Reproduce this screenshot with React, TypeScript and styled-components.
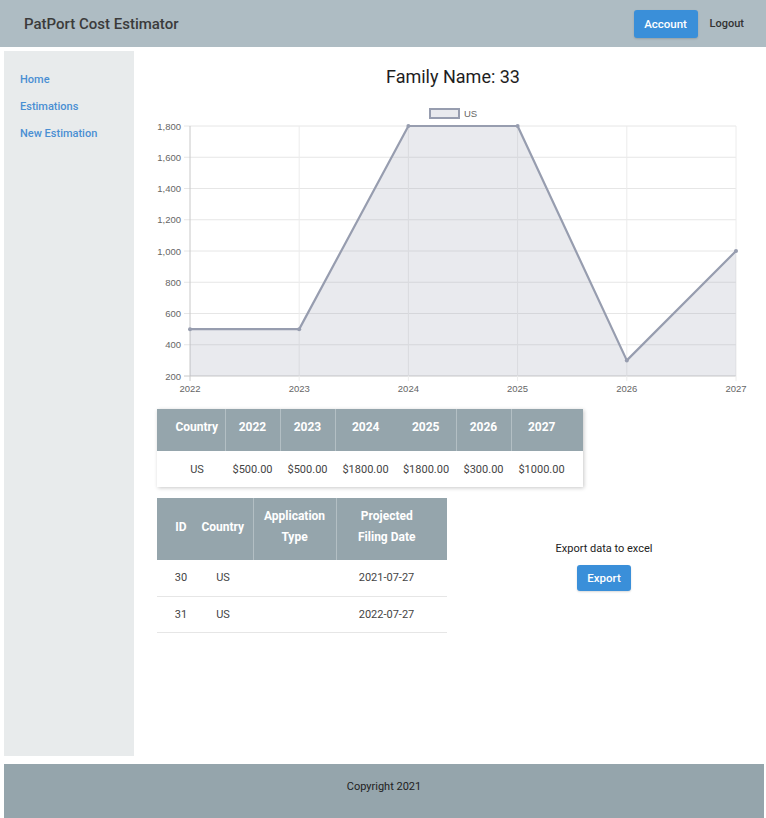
import React from "react";
import styled, { createGlobalStyle } from "styled-components";

const Global = createGlobalStyle`
  html, body { margin: 0; padding: 0; background: #fff; }
  body { font-family: Roboto, "Noto Sans", Arial, sans-serif; }
  * { box-sizing: border-box; }
`;

const Header = styled.header`
  height: 47px;
  background: #aebcc3;
  display: flex;
  align-items: center;
  padding: 0 22px 0 24px;
`;
const Brand = styled.div`
  font-size: 15px;
  font-weight: 500;
  color: #3b3b3b;
  flex: 1;
`;
const BlueButton = styled.button<{ w: number; h: number }>`
  background: #3a8fd9;
  color: #fff;
  border: none;
  border-radius: 3px;
  font-family: Roboto, Arial, sans-serif;
  font-size: 11.5px;
  font-weight: 500;
  padding: 0;
  width: ${(p) => p.w}px;
  height: ${(p) => p.h}px;
  box-shadow: 0 1px 2px rgba(0, 0, 0, 0.15);
`;
const TextLink = styled.span`
  font-size: 11px;
  font-weight: 500;
  color: #333;
  margin-left: 12px;
`;
const Body = styled.div`
  display: flex;
  padding: 4px 0 0 4px;
`;
const Sidebar = styled.nav`
  width: 130px;
  height: 705px;
  background: #e8ebec;
  padding: 22px 0 0 16px;
  display: flex;
  flex-direction: column;
  gap: 13px;
`;
const NavLink = styled.a`
  font-size: 11px;
  font-weight: 500;
  color: #4a8fd3;
  line-height: 14px;
`;
const Main = styled.main`
  flex: 1;
  display: flex;
  flex-direction: column;
`;
const Title = styled.h1`
  margin: 15px 0 0;
  padding-left: 6px;
  font-size: 18px;
  font-weight: 400;
  line-height: 22px;
  color: #1e1e1e;
  text-align: center;
`;
const ChartSvg = styled.svg`
  display: block;
  margin-top: 10px;
  font-family: "Liberation Sans", Arial, sans-serif;
`;
const Tables = styled.div`
  padding-left: 23px;
  margin-top: 11px;
  display: flex;
  flex-direction: column;
  gap: 11px;
`;
const Paper = styled.div`
  width: 426px;
  box-shadow: 1px 1px 4px rgba(0, 0, 0, 0.22);
`;
const Table = styled.table<{ w: number }>`
  border-collapse: collapse;
  table-layout: fixed;
  width: ${(p) => p.w}px;
`;
const Th = styled.th<{ w: number; pl?: number; pr?: number; bl?: boolean; h: number; pb: number }>`
  width: ${(p) => p.w}px;
  height: ${(p) => p.h}px;
  padding: 0 ${(p) => p.pr ?? 0}px ${(p) => p.pb}px ${(p) => p.pl ?? 0}px;
  background: #95a5ac;
  color: #fff;
  font-size: 12px;
  font-weight: 700;
  line-height: 21px;
  text-align: center;
  border-left: ${(p) => (p.bl ? "1px solid #b3bfc4" : "none")};
`;
const Td = styled.td<{ pl?: number; pr?: number; h: number; line?: boolean }>`
  height: ${(p) => p.h}px;
  padding: 0 ${(p) => p.pr ?? 0}px 0 ${(p) => p.pl ?? 0}px;
  font-size: 11px;
  color: #444;
  text-align: center;
  border-bottom: ${(p) => (p.line ? "1px solid #e6e6e6" : "none")};
`;
const LowerRow = styled.div`
  display: flex;
  align-items: flex-start;
`;
const ExportPanel = styled.div`
  width: 314px;
  padding-top: 44px;
  display: flex;
  flex-direction: column;
  align-items: center;
  gap: 10px;
`;
const ExportText = styled.div`
  font-size: 11px;
  color: #222;
  line-height: 13px;
`;
const Footer = styled.footer`
  margin: 8px 2px 0 4px;
  height: 54px;
  background: #95a5ac;
  text-align: center;
  padding-top: 16px;
  font-size: 11px;
  color: #222;
`;

const values = [500, 500, 1800, 1800, 300, 1000];
const years = [2022, 2023, 2024, 2025, 2026, 2027];
const L = 56, R = 602, T = 28, B = 278;
const xs = (i: number) => L + (i * (R - L)) / 5;
const ys = (v: number) => B - ((v - 200) / 1600) * (B - T);

function Chart() {
  const ticks = [200, 400, 600, 800, 1000, 1200, 1400, 1600, 1800];
  const pts = values.map((v, i) => `${xs(i)},${ys(v)}`).join(" ");
  const area = `${L},${B} ${pts} ${R},${B}`;
  return (
    <ChartSvg width={632} height={300} viewBox="0 0 632 300">
      {ticks.map((t) => (
        <g key={t}>
          <line x1={50} x2={R} y1={ys(t)} y2={ys(t)} stroke={t === 200 ? "#c8c8c8" : "#e6e6e6"} strokeWidth={1} />
          <text x={47} y={ys(t) + 3.5} fontSize={9.5} fill="#666" textAnchor="end">
            {t.toLocaleString("en-US")}
          </text>
        </g>
      ))}
      {years.map((y, i) => (
        <g key={y}>
          <line x1={xs(i)} x2={xs(i)} y1={T} y2={B + 5} stroke={i === 0 ? "#c8c8c8" : "#ececec"} strokeWidth={1} />
          <text x={xs(i)} y={294} fontSize={9.5} fill="#666" textAnchor="middle">
            {y}
          </text>
        </g>
      ))}
      <polygon points={area} fill="rgba(154,160,176,0.22)" />
      <polyline points={pts} fill="none" stroke="#979daf" strokeWidth={2.2} strokeLinejoin="round" />
      {values.map((v, i) => (
        <circle key={i} cx={xs(i)} cy={ys(v)} r={2} fill="#979daf" />
      ))}
      <rect x={296} y={11} width={29} height={9} fill="rgba(154,160,176,0.22)" stroke="#979daf" strokeWidth={2} />
      <text x={330} y={18.5} fontSize={9.5} fill="#666">US</text>
    </ChartSvg>
  );
}

export default function App() {
  const heads1 = [
    { t: "Country", w: 68, pl: 12 },
    { t: "2022", w: 55, bl: true },
    { t: "2023", w: 55, bl: true },
    { t: "2024", w: 61, bl: true },
    { t: "2025", w: 60 },
    { t: "2026", w: 55, bl: true },
    { t: "2027", w: 72, pr: 11, bl: true },
  ];
  const row1 = ["US", "$500.00", "$500.00", "$1800.00", "$1800.00", "$300.00", "$1000.00"];
  const rows2 = [
    ["30", "US", "", "2021-07-27"],
    ["31", "US", "", "2022-07-27"],
  ];
  return (
    <>
      <Global />
      <Header>
        <Brand>PatPort Cost Estimator</Brand>
        <BlueButton w={64} h={28}>Account</BlueButton>
        <TextLink>Logout</TextLink>
      </Header>
      <Body>
        <Sidebar>
          <NavLink>Home</NavLink>
          <NavLink>Estimations</NavLink>
          <NavLink>New Estimation</NavLink>
        </Sidebar>
        <Main>
          <Title>Family Name: 33</Title>
          <Chart />
          <Tables>
            <Paper>
              <Table w={426}>
                <thead>
                  <tr>
                    {heads1.map((h) => (
                      <Th key={h.t} w={h.w} pl={h.pl} pr={h.pr} bl={h.bl} h={42} pb={6}>
                        {h.t}
                      </Th>
                    ))}
                  </tr>
                </thead>
                <tbody>
                  <tr>
                    {row1.map((c, i) => (
                      <Td key={i} h={36} pl={heads1[i].pl} pr={heads1[i].pr}>
                        {c}
                      </Td>
                    ))}
                  </tr>
                </tbody>
              </Table>
            </Paper>
            <LowerRow>
              <Table w={290}>
                <thead>
                  <tr>
                    <Th w={38} pl={10} h={62} pb={4}>ID</Th>
                    <Th w={58} pr={2} h={62} pb={4}>Country</Th>
                    <Th w={83} bl h={62} pb={4}>Application<br />Type</Th>
                    <Th w={111} pr={10} bl h={62} pb={4}>Projected<br />Filing Date</Th>
                  </tr>
                </thead>
                <tbody>
                  {rows2.map((r) => (
                    <tr key={r[0]}>
                      <Td h={36} pl={10} line>{r[0]}</Td>
                      <Td h={36} pr={2} line>{r[1]}</Td>
                      <Td h={36} line>{r[2]}</Td>
                      <Td h={36} pr={10} line>{r[3]}</Td>
                    </tr>
                  ))}
                </tbody>
              </Table>
              <ExportPanel>
                <ExportText>Export data to excel</ExportText>
                <BlueButton w={54} h={26}>Export</BlueButton>
              </ExportPanel>
            </LowerRow>
          </Tables>
        </Main>
      </Body>
      <Footer>Copyright 2021</Footer>
    </>
  );
}
